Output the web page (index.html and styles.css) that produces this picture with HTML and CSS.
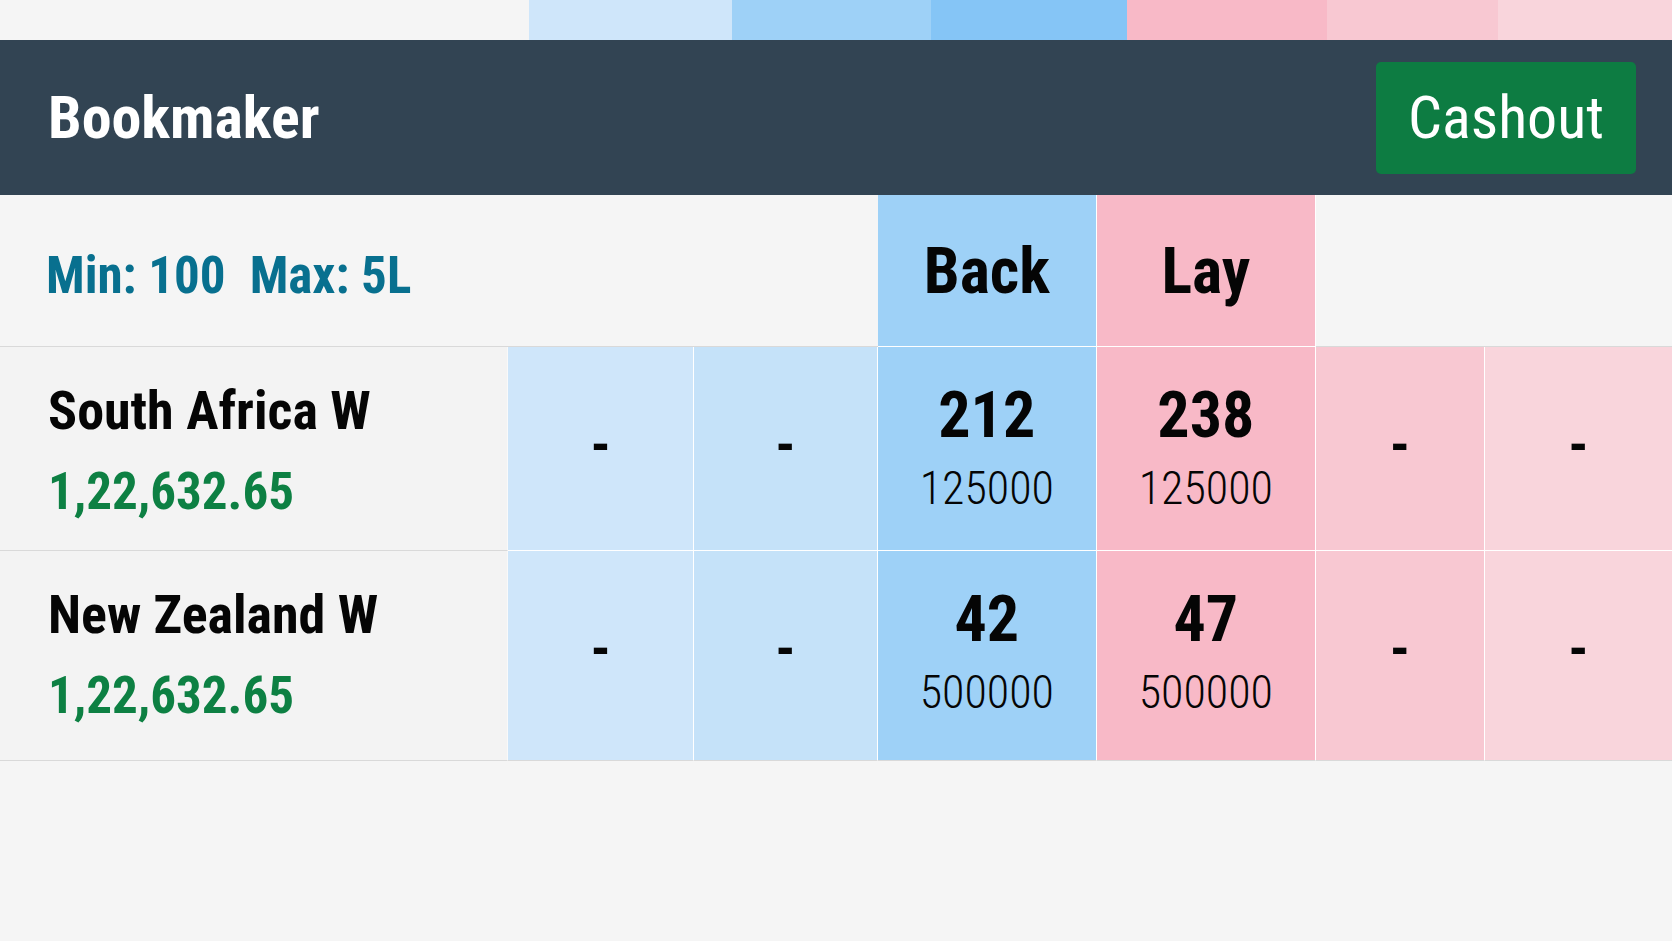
FILE: index.html
```html
<!DOCTYPE html>
<html lang="en">
<head>
  <meta charset="UTF-8">
  <meta name="viewport" content="width=device-width, initial-scale=1.0">
  <title>Bookmaker</title>
  <link rel="stylesheet" href="styles.css">
</head>
<body>
  <div class="strip">
    <span></span>
    <span class="back3"></span>
    <span class="back1"></span>
    <span class="back0"></span>
    <span class="lay1"></span>
    <span class="lay2"></span>
    <span class="lay3"></span>
  </div>

  <div class="market-title">
    <h1>Bookmaker</h1>
    <button type="button" class="cashout">Cashout</button>
  </div>

  <table class="market">
    <colgroup>
      <col class="col-team">
      <col class="col-back3">
      <col class="col-back2">
      <col class="col-back1">
      <col class="col-lay1">
      <col class="col-lay2">
      <col class="col-lay3">
    </colgroup>
    <thead>
      <tr>
        <th class="limits" colspan="3"><span>Min: 100</span><span>Max: 5L</span></th>
        <th class="side back1">Back</th>
        <th class="side lay1">Lay</th>
        <td class="blank" colspan="2"></td>
      </tr>
    </thead>
    <tbody>
      <tr>
        <th class="team">
          <p class="name">South Africa W</p>
          <p class="amount">1,22,632.65</p>
        </th>
        <td class="price back3"><p class="empty">-</p></td>
        <td class="price back2"><p class="empty">-</p></td>
        <td class="price back1">
          <p class="odds">212</p>
          <p class="volume">125000</p>
        </td>
        <td class="price lay1">
          <p class="odds">238</p>
          <p class="volume">125000</p>
        </td>
        <td class="price lay2"><p class="empty">-</p></td>
        <td class="price lay3"><p class="empty">-</p></td>
      </tr>
      <tr>
        <th class="team">
          <p class="name">New Zealand W</p>
          <p class="amount">1,22,632.65</p>
        </th>
        <td class="price back3"><p class="empty">-</p></td>
        <td class="price back2"><p class="empty">-</p></td>
        <td class="price back1">
          <p class="odds">42</p>
          <p class="volume">500000</p>
        </td>
        <td class="price lay1">
          <p class="odds">47</p>
          <p class="volume">500000</p>
        </td>
        <td class="price lay2"><p class="empty">-</p></td>
        <td class="price lay3"><p class="empty">-</p></td>
      </tr>
    </tbody>
  </table>
</body>
</html>
```

FILE: styles.css
```css
*{
  margin: 0;
  padding: 0;
  box-sizing: border-box;
}
body{
  background-color: #f5f5f5;
  color: #050505;
  font-family: "Roboto Condensed", "Liberation Sans Narrow", Roboto, sans-serif;
}

/* price colours, darkest next to the middle */
.back0{
  background-color: #85c5f6;
}
.back1{
  background-color: #9ed1f7;
}
.back2{
  background-color: #c5e2f9;
}
.back3{
  background-color: #cfe6fa;
}
.lay1{
  background-color: #f8b9c7;
}
.lay2{
  background-color: #f8c8d2;
}
.lay3{
  background-color: #f9d5dc;
}

.strip{
  display: grid;
  grid-template-columns: 529fr 203fr 199fr 196fr 200fr 171fr 174fr;
  height: 40px;
}

.market-title{
  display: flex;
  align-items: center;
  justify-content: space-between;
  padding: 22px 36px 21px 48px;
  background-color: #324453;
  color: #fff;
}
.market-title h1{
  font-size: 60px;
  line-height: 72px;
}
.cashout{
  padding: 20px 32px;
  border: 0;
  border-radius: 5px;
  background-color: #0d7c42;
  color: #fff;
  font-family: inherit;
  font-size: 60px;
  line-height: 72px;
  cursor: pointer;
}

.market{
  width: 100%;
  table-layout: fixed;
  border-collapse: separate;
  border-spacing: 0;
}
.col-team{
  width: 30.4%;
}
.col-back3{
  width: 11.1%;
}
.col-back2{
  width: 11%;
}
.col-back1{
  width: 13.1%;
}
.col-lay1{
  width: 13.1%;
}
.col-lay2{
  width: 10.1%;
}
.market th,
.market td{
  border-bottom: 1px solid #d9d9d9;
}
.market thead th{
  padding: 37px 0 34px;
  line-height: 80px;
}
.market thead .limits{
  padding: 41px 0 30px 46px;
  color: #08708f;
  font-size: 51px;
  text-align: left;
}
.limits span + span{
  margin-left: 24px;
}
.market .side{
  border-right: 1px solid #fff;
  border-bottom-color: #fff;
  font-size: 64px;
  text-align: center;
}

.market .team{
  padding: 30px 0 26px 48px;
  border-right: 1px solid #f9f9f9;
  background-color: #f3f3f3;
  text-align: left;
  vertical-align: top;
}
.name{
  font-size: 54px;
  line-height: 68px;
}
.amount{
  margin-top: 15px;
  color: #0d8043;
  font-size: 51px;
  line-height: 64px;
}
.market .price{
  padding-top: 29px;
  border-right: 1px solid #fff;
  border-bottom-color: #fff;
  text-align: center;
  vertical-align: top;
}
.market .price:last-child{
  border-right: 0;
}
.odds{
  font-size: 64px;
  font-weight: bold;
  line-height: 80px;
}
.volume{
  margin-top: 4px;
  font-size: 46px;
  font-weight: 300;
  line-height: 56px;
}
.empty{
  font-size: 56px;
  font-weight: bold;
  line-height: 138px;
}
.market tbody tr:last-child > *{
  padding-bottom: 32px;
  border-bottom-color: #d9d9d9;
}
```
